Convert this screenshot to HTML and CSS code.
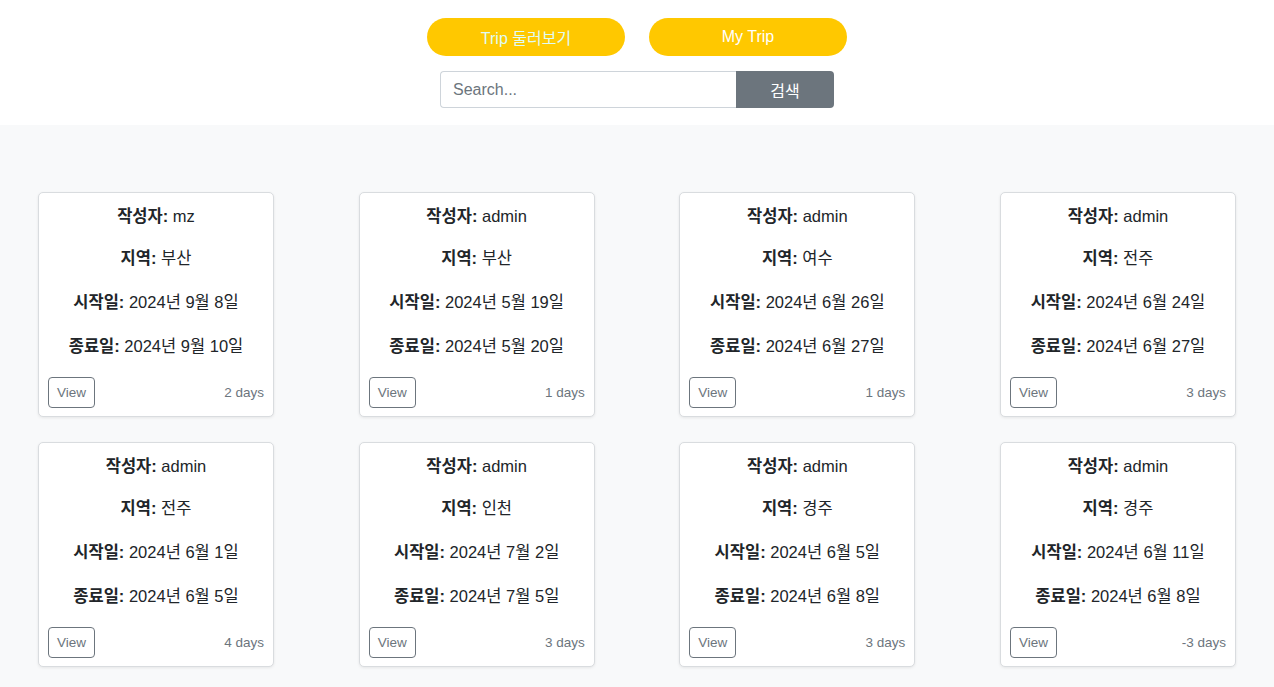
FILE: index.html
```html
<!DOCTYPE html>
<html lang="ko">
<head>
<meta charset="utf-8">
<title>Trip</title>
<link rel="stylesheet" href="styles.css">
</head>
<body>
<header class="top">
  <div class="nav-buttons">
    <button class="pill pill-explore">Trip 둘러보기</button>
    <button class="pill">My Trip</button>
  </div>
  <form class="search">
    <input class="search-input" type="text" placeholder="Search...">
    <button class="search-btn" type="button">검색</button>
  </form>
</header>
<main class="album">
  <div class="grid">
    <div class="card">
      <p><b>작성자:</b> mz</p>
      <p><b>지역:</b> 부산</p>
      <p><b>시작일:</b> 2024년 9월 8일</p>
      <p><b>종료일:</b> 2024년 9월 10일</p>
      <div class="card-foot"><button class="view">View</button><small>2 days</small></div>
    </div>
    <div class="card">
      <p><b>작성자:</b> admin</p>
      <p><b>지역:</b> 부산</p>
      <p><b>시작일:</b> 2024년 5월 19일</p>
      <p><b>종료일:</b> 2024년 5월 20일</p>
      <div class="card-foot"><button class="view">View</button><small>1 days</small></div>
    </div>
    <div class="card">
      <p><b>작성자:</b> admin</p>
      <p><b>지역:</b> 여수</p>
      <p><b>시작일:</b> 2024년 6월 26일</p>
      <p><b>종료일:</b> 2024년 6월 27일</p>
      <div class="card-foot"><button class="view">View</button><small>1 days</small></div>
    </div>
    <div class="card">
      <p><b>작성자:</b> admin</p>
      <p><b>지역:</b> 전주</p>
      <p><b>시작일:</b> 2024년 6월 24일</p>
      <p><b>종료일:</b> 2024년 6월 27일</p>
      <div class="card-foot"><button class="view">View</button><small>3 days</small></div>
    </div>
    <div class="card">
      <p><b>작성자:</b> admin</p>
      <p><b>지역:</b> 전주</p>
      <p><b>시작일:</b> 2024년 6월 1일</p>
      <p><b>종료일:</b> 2024년 6월 5일</p>
      <div class="card-foot"><button class="view">View</button><small>4 days</small></div>
    </div>
    <div class="card">
      <p><b>작성자:</b> admin</p>
      <p><b>지역:</b> 인천</p>
      <p><b>시작일:</b> 2024년 7월 2일</p>
      <p><b>종료일:</b> 2024년 7월 5일</p>
      <div class="card-foot"><button class="view">View</button><small>3 days</small></div>
    </div>
    <div class="card">
      <p><b>작성자:</b> admin</p>
      <p><b>지역:</b> 경주</p>
      <p><b>시작일:</b> 2024년 6월 5일</p>
      <p><b>종료일:</b> 2024년 6월 8일</p>
      <div class="card-foot"><button class="view">View</button><small>3 days</small></div>
    </div>
    <div class="card">
      <p><b>작성자:</b> admin</p>
      <p><b>지역:</b> 경주</p>
      <p><b>시작일:</b> 2024년 6월 11일</p>
      <p><b>종료일:</b> 2024년 6월 8일</p>
      <div class="card-foot"><button class="view">View</button><small>-3 days</small></div>
    </div>
  </div>
</main>
</body>
</html>
```

FILE: styles.css
```css
* { box-sizing: border-box; }
html, body {
  margin: 0;
  padding: 0;
  font-family: "Liberation Sans", Arial, "Noto Sans CJK KR", sans-serif;
  color: #212529;
  background: #fff;
}
.top {
  background: #fff;
  padding: 18px 0 17px;
  display: flex;
  flex-direction: column;
  align-items: center;
  gap: 15px;
}
.nav-buttons {
  display: flex;
  gap: 24px;
}
.pill {
  width: 198px;
  height: 38px;
  border: none;
  border-radius: 19px;
  background: #ffc800;
  color: #fff;
  font-family: inherit;
  font-size: 16px;
  cursor: pointer;
}
.pill-explore { color: #dffcf4; }
.search {
  display: flex;
  margin: 0;
}
.search-input {
  width: 296px;
  height: 37px;
  border: 1px solid #ced4da;
  border-right: none;
  border-radius: 4px 0 0 4px;
  padding: 0 12px;
  font-family: inherit;
  font-size: 16px;
  color: #212529;
}
.search-input::placeholder { color: #6c757d; }
.search-btn {
  width: 98px;
  height: 37px;
  border: none;
  border-radius: 0 4px 4px 0;
  background: #6c757d;
  color: #fff;
  font-family: inherit;
  font-size: 16px;
}
.album {
  background: #f8f9fa;
  padding: 67px 38px 30px;
  min-height: 562px;
}
.grid {
  display: grid;
  grid-template-columns: repeat(4, 236px);
  justify-content: space-between;
  row-gap: 25px;
}
.card {
  background: #fff;
  border: 1px solid #d9dcdf;
  border-radius: 5px;
  box-shadow: 0 1px 3px rgba(0,0,0,0.08);
  height: 225px;
  padding: 11px 9px 8px;
  display: flex;
  flex-direction: column;
  text-align: center;
}
.card p {
  margin: 0 0 20px;
  line-height: 24px;
  font-size: 16.5px;
}
.card p:first-child { margin-bottom: 18px; }
.card p:last-of-type { margin-bottom: 0; }
.card b { font-weight: 700; }
.card-foot {
  margin-top: auto;
  display: flex;
  justify-content: space-between;
  align-items: center;
  height: 31px;
}
.view {
  width: 47px;
  height: 31px;
  background: #fff;
  border: 1px solid #6c757d;
  border-radius: 4px;
  color: #6c757d;
  font-family: inherit;
  font-size: 13.5px;
  padding: 0;
}
.card-foot small {
  font-size: 13.5px;
  color: #6c757d;
}
```
